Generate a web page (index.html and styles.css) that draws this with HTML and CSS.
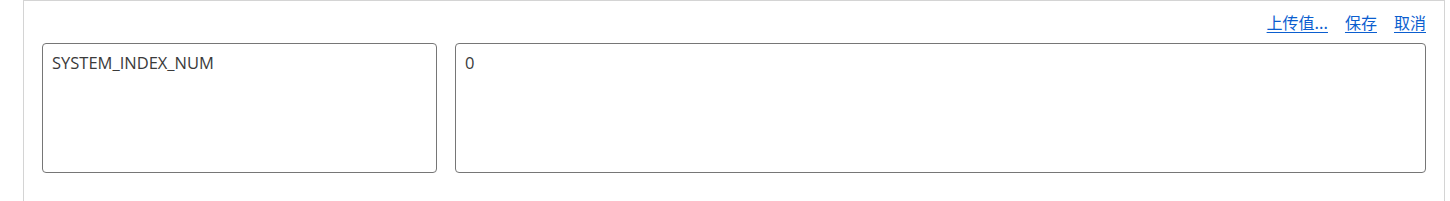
FILE: index.html
```html
<!DOCTYPE html>
<html lang="zh-CN">
<head>
    <meta charset="UTF-8">
    <meta name="viewport" content="width=device-width, initial-scale=1.0">
    <title>编辑参数</title>
    <link rel="stylesheet" href="styles.css">
</head>
<body>
    <div class="panel">
        <div class="actions">
            <a href="#" class="action">上传值...</a>
            <a href="#" class="action">保存</a>
            <a href="#" class="action">取消</a>
        </div>
        <div class="fields">
            <textarea class="field field-name">SYSTEM_INDEX_NUM</textarea>
            <textarea class="field field-value">0</textarea>
        </div>
    </div>
</body>
</html>
```

FILE: styles.css
```css
body {
    font-family: 'Open Sans', 'Noto Sans CJK SC', sans-serif;
    margin: 0;
    padding: 0;
    background-color: #fff;
    color: #333;
}
.panel {
    margin: 0 5px 0 23px;
    padding: 11px 18px 28px 18px;
    border: 1px solid #d4d4d4;
    border-bottom: none;
    height: 201px;
    box-sizing: border-box;
    overflow: hidden;
}
.actions {
    display: flex;
    justify-content: flex-end;
    height: 31px;
}
.action {
    margin-left: 17px;
    font-family: 'Noto Sans CJK SC', 'Open Sans', sans-serif;
    font-size: 16px;
    line-height: 20px;
    color: #0b5ecf;
    text-decoration: underline;
    text-underline-offset: 3px;
}
.fields {
    display: flex;
    gap: 18px;
}
.field {
    height: 130px;
    box-sizing: border-box;
    padding: 9px 9px 7px 9px;
    border: 1px solid #767676;
    border-radius: 4px;
    font-family: 'Open Sans', sans-serif;
    font-size: 16.5px;
    line-height: 20px;
    color: #3a3a3a;
    resize: none;
    outline: none;
    margin: 0;
}
.field-name {
    width: 395px;
}
.field-value {
    flex: 1;
}
```
